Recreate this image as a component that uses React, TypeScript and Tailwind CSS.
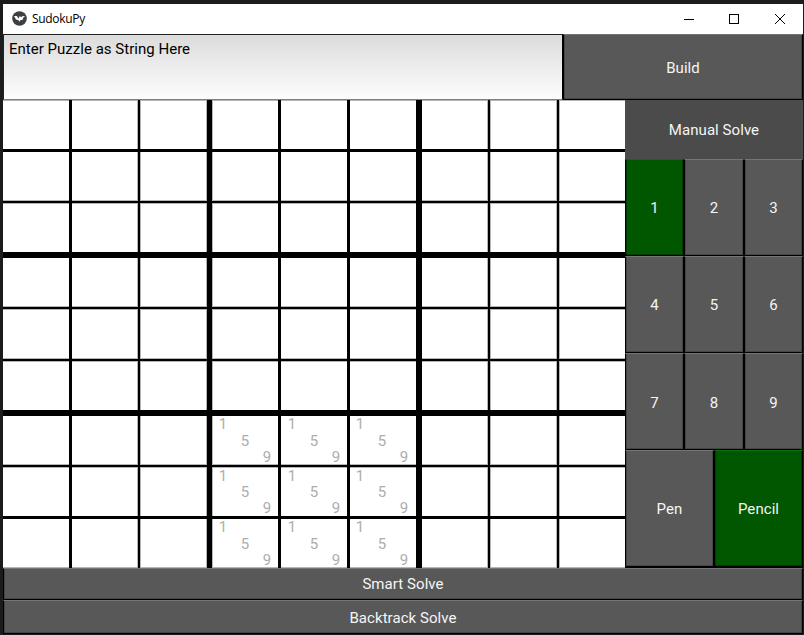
const COLS = [
  { size: 66, line: 3, edge: "" },
  { size: 66, line: 2, edge: "border-r" },
  { size: 67, line: 5, edge: "border-x" },
  { size: 66, line: 3, edge: "border-l" },
  { size: 66, line: 3, edge: "" },
  { size: 66, line: 6, edge: "" },
  { size: 66, line: 2, edge: "border-r" },
  { size: 67, line: 2, edge: "border-x" },
  { size: 66, line: 0, edge: "border-l" },
];

const ROWS = [
  { size: 49, line: 3, edge: "border-t" },
  { size: 49, line: 2, edge: "border-b" },
  { size: 49, line: 6, edge: "border-t" },
  { size: 49, line: 2, edge: "border-b" },
  { size: 50, line: 2, edge: "border-y" },
  { size: 49, line: 6, edge: "border-t" },
  { size: 49, line: 2, edge: "border-b" },
  { size: 49, line: 3, edge: "border-t" },
  { size: 49, line: 0, edge: "border-b" },
];

function PencilMarks({ className }: { className: string }) {
  return (
    <div className={`grid h-[49px] w-[66px] grid-cols-3 text-[15px] leading-[17px] text-[#adadad] ${className}`}>
      {[1, 2, 3, 4, 5, 6, 7, 8, 9].map((n) => (
        <span key={n} className="text-center">
          {n % 4 === 1 ? n : ""}
        </span>
      ))}
    </div>
  );
}

function Board() {
  return (
    <div className="w-[622px] bg-black">
      {ROWS.map((row, r) => (
        <div key={r} className="flex" style={{ height: row.size, marginBottom: row.line }}>
          {COLS.map((col, c) => (
            <div
              key={c}
              className={`shrink-0 border-[#b5b5b5] bg-white ${row.edge} ${col.edge}`}
              style={{ width: col.size, marginRight: col.line }}
            >
              {r > 5 && c > 2 && c < 6 && (
                <PencilMarks
                  className={`${r === 7 ? "grid-rows-[16px_16px_17px]" : "grid-rows-[17px_16px_16px]"} ${c === 4 ? "" : "-ml-px"}`}
                />
              )}
            </div>
          ))}
        </div>
      ))}
    </div>
  );
}

function Button({ label, className, active = false }: { label: string; className: string; active?: boolean }) {
  const tone = active
    ? "border-t-[#087008] bg-[#005700] shadow-[inset_1px_0_#003a00,inset_-1px_-1px_#003a00]"
    : "border-t-[#757575] bg-[#585858] shadow-[inset_1px_0_#454545,inset_-1px_-1px_#454545]";
  return (
    <button
      className={`flex items-center justify-center border border-black text-[15px] leading-[18px] tracking-[0.06px] text-[#f5f5f5] ${tone} ${className}`}
    >
      {label}
    </button>
  );
}

function TitleBar() {
  return (
    <div className="flex h-[30px] items-center bg-white pl-[9px] text-black">
      <svg className="-mt-px" width="15" height="15" viewBox="0 0 15 15">
        <circle cx="7.5" cy="7.5" r="7.3" fill="#3c4043" />
        <path d="M2 4.9 4.8 5 6.6 7.4 7.8 5 9.2 6.3 10.8 5 13.2 5.4 11.4 6.6 10.4 8.9 8.6 9 7.2 10.8 6.6 9.2 4 8.4Z" fill="#fff" />
      </svg>
      <span className="ml-[5px] font-['Open_Sans','Noto_Sans',sans-serif] text-[12px] leading-4 tracking-[-0.32px]">SudokuPy</span>
      <svg className="ml-auto mr-4" width="103" height="12" viewBox="0 0 103 12" fill="none" stroke="#000" shapeRendering="crispEdges">
        <path d="M0 6.5H10M45.5 1.5H54.5V10.5H45.5Z" />
        <path d="M91 1 101 11M101 1 91 11" shapeRendering="auto" />
      </svg>
    </div>
  );
}

export default function App() {
  return (
    <div className="h-[635px] w-[804px] bg-[#1c1c1c] pr-px pl-[3px] pt-1 font-['Roboto',sans-serif]">
      <TitleBar />
      <div className="flex h-[66px]">
        <div className="w-[560px] border border-[#222] border-r-black border-b-[#808080] bg-linear-to-b from-[#dcdcdc] to-[#fdfdfd] pl-[5px] pt-[5px] text-[15px] leading-[18px] tracking-[0.02px] text-black">
          Enter Puzzle as String Here
        </div>
        <Button label="Build" className="w-[240px] pt-0.5" />
      </div>
      <div className="flex h-[468px]">
        <Board />
        <div className="w-[178px] bg-black">
          <div className="flex h-[59px] items-center justify-center bg-[#4b4b4b] pt-0.5 text-[15px] tracking-[0.06px] text-[#f5f5f5]">
            Manual Solve
          </div>
          <div className="grid grid-cols-[59px_60px_59px] grid-rows-[97px_97px_97px]">
            {[1, 2, 3, 4, 5, 6, 7, 8, 9].map((n) => (
              <Button key={n} label={String(n)} active={n === 1} className={n > 6 ? "pt-0.5" : ""} />
            ))}
          </div>
          <div className="grid h-[117px] grid-cols-2">
            <Button label="Pen" className="" />
            <Button label="Pencil" active className="" />
          </div>
        </div>
      </div>
      <Button label="Smart Solve" className="h-8 w-[800px]" />
      <Button label="Backtrack Solve" className="h-[34px] w-[800px] pt-0.5" />
    </div>
  );
}
